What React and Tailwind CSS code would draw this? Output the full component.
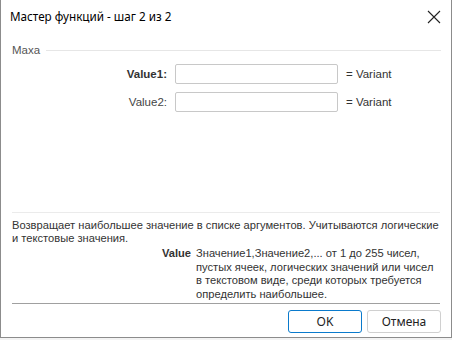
export default function App() {
  const tahoma = { fontFamily: '"Liberation Sans", Arial, sans-serif' };
  return (
    <div className="w-[452px] h-[340px] bg-[#f3f3f3] overflow-hidden" style={tahoma}>
      <div className="h-[338px] flex flex-col bg-white border-x border-b border-[#8c8c8c]">
        {/* title bar */}
        <div className="h-[31px] flex items-center justify-between pl-[9px] pr-[10px] pt-[2px]">
          <span className="text-[11.7px] text-black" style={{ fontFamily: '"Noto Sans", "Open Sans", sans-serif' }}>
            Мастер функций - шаг 2 из 2
          </span>
          <svg width="14" height="14" viewBox="0 0 14 14" className="text-[#222]">
            <path d="M1 1 L13 13 M13 1 L1 13" stroke="currentColor" strokeWidth="1.1" fill="none" />
          </svg>
        </div>

        {/* group header */}
        <div className="mt-[11px] flex items-center pl-[11px] pr-[10px] gap-[6px]">
          <span className="text-[11.5px] text-[#555]">Maxa</span>
          <div className="flex-1 h-px bg-[#e6e6e6]" />
        </div>

        {/* arguments */}
        <div className="mt-[5px] flex flex-col gap-[8px] text-[11.5px] text-[#333]">
          <div className="flex items-center">
            <span className="w-[166px] text-right font-bold text-[#333]">Value1:</span>
            <div className="ml-[8px] w-[163px] h-[20px] border border-[#c8c8c8] rounded-[2px] bg-white" />
            <span className="ml-[8px]">= Variant</span>
          </div>
          <div className="flex items-center">
            <span className="w-[166px] text-right text-[#444]">Value2:</span>
            <div className="ml-[8px] w-[163px] h-[20px] border border-[#c8c8c8] rounded-[2px] bg-white" />
            <span className="ml-[8px]">= Variant</span>
          </div>
        </div>

        <div className="flex-1" />

        {/* description */}
        <div className="mx-[11px] h-px bg-[#ebebeb]" />
        <div className="px-[11px] pt-[6px] text-[11.15px] leading-[13.5px] text-[#333] whitespace-nowrap">
          <p>
            Возвращает наибольшее значение в списке аргументов. Учитываются логические
            <br />и текстовые значения.
          </p>
          <div className="mt-[1.5px] flex">
            <span className="w-[184px] pr-[5px] text-right font-bold">Value</span>
            <p>
              Значение1,Значение2,... от 1 до 255 чисел,
              <br />пустых ячеек, логических значений или чисел
              <br />в текстовом виде, среди которых требуется
              <br />определить наибольшее.
            </p>
          </div>
        </div>

        <div className="mt-[2px] mx-[11px] h-px bg-[#a0a0a0]" />

        {/* buttons */}
        <div className="flex justify-end gap-[5px] pr-[10px] pt-[6px] pb-[4px] text-[12px] text-[#222]" style={{ fontFamily: '"Noto Sans", "Open Sans", sans-serif' }}>
          <button className="w-[74px] h-[23px] border border-[#0a7acc] rounded-[3px] bg-white">OK</button>
          <button className="w-[74px] h-[23px] border border-[#d0d0d0] rounded-[3px] bg-white">Отмена</button>
        </div>
      </div>
    </div>
  );
}
